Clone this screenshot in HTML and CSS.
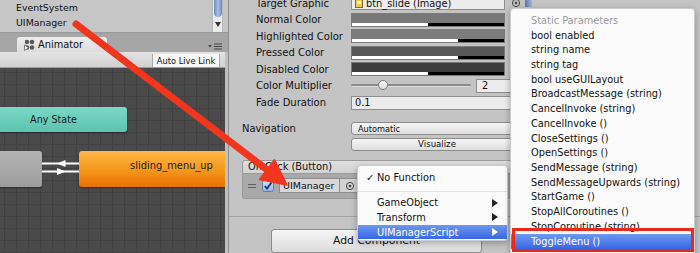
FILE: index.html
```html
<!DOCTYPE html>
<html lang="en">
<head>
    <meta charset="UTF-8">
    <meta name="viewport" content="width=device-width, initial-scale=1.0">
    <title>Unity - On Click</title>
    <link rel="stylesheet" href="styles.css">
</head>
<body>
<div class="editor">

    <div class="dock-left">
        <div class="hierarchy">
            <ul class="hier-list">
                <li>EventSystem</li>
                <li>UIManager</li>
            </ul>
            <div class="scrollbar">
                <div class="scroll-thumb"></div>
                <div class="scroll-arrow"></div>
            </div>
        </div>

        <div class="tabbar">
            <div class="tab">
                <svg class="tab-icon" width="11" height="12" viewBox="0 0 11 12">
                    <circle cx="3" cy="3" r="2.3" fill="#5a5a5a"/>
                    <circle cx="8" cy="3" r="2.3" fill="#5a5a5a"/>
                    <circle cx="3" cy="8.5" r="2.3" fill="#5a5a5a"/>
                    <circle cx="8" cy="8.5" r="2.3" fill="#5a5a5a"/>
                    <path d="M0.5 6 L0.5 11.5 L4.5 8.7 Z" fill="#ffffff" stroke="#444" stroke-width="0.6"/>
                </svg>
                <span>Animator</span>
            </div>
            <svg class="tab-menu" width="14" height="7" viewBox="0 0 14 7">
                <path d="M0 2 L4 2 L2 4.5 Z" fill="#444"/>
                <rect x="6" y="0.5" width="8" height="1" fill="#444"/>
                <rect x="6" y="3" width="8" height="1" fill="#444"/>
                <rect x="6" y="5.5" width="8" height="1" fill="#444"/>
            </svg>
        </div>

        <div class="dock-body">
            <div class="animator">
                <div class="toolbar">
                    <span class="tool-btn">Auto Live Link</span>
                </div>
                <div class="graph">
                    <div class="node node-any">Any State</div>
                    <div class="node node-gray"></div>
                    <div class="node node-orange">sliding_menu_up</div>
                    <svg class="transitions" width="225" height="185" viewBox="0 0 225 185">
                        <line x1="42" y1="95.5" x2="79" y2="95.5" stroke="#ffffff" stroke-width="2"/>
                        <path d="M57 95.5 L65.5 92 L65.5 99 Z" fill="#ffffff"/>
                        <line x1="42" y1="103.5" x2="79" y2="103.5" stroke="#ffffff" stroke-width="2"/>
                        <path d="M65.5 103.5 L57 100 L57 107 Z" fill="#ffffff"/>
                    </svg>
                </div>
            </div>
        </div>
    </div>

    <div class="inspector">
        <div class="props">
            <div class="prop">
                <span class="prop-label">Target Graphic</span>
                <div class="field field-object">
                    <svg width="8" height="9" viewBox="0 0 8 9"><rect x="0.5" y="0.5" width="7" height="8" fill="#f0c84a" stroke="#8a6a1a"/><rect x="2" y="2" width="4" height="3" fill="#fff3b0"/></svg>
                    <span>btn_slide (Image)</span>
                </div>
                <svg class="picker" width="10" height="10" viewBox="0 0 10 10"><circle cx="5" cy="5" r="3.6" fill="none" stroke="#444" stroke-width="1"/><circle cx="5" cy="5" r="1.3" fill="#444"/></svg>
                <span class="scroll-mark"></span>
            </div>
            <div class="prop">
                <span class="prop-label">Normal Color</span>
                <div class="color color-normal"></div>
            </div>
            <div class="prop">
                <span class="prop-label">Highlighted Color</span>
                <div class="color color-highlighted"></div>
            </div>
            <div class="prop">
                <span class="prop-label">Pressed Color</span>
                <div class="color color-pressed"></div>
            </div>
            <div class="prop">
                <span class="prop-label">Disabled Color</span>
                <div class="color color-disabled"></div>
            </div>
            <div class="prop">
                <span class="prop-label">Color Multiplier</span>
                <div class="slider"><div class="slider-knob"></div></div>
                <div class="field field-num">2</div>
            </div>
            <div class="prop">
                <span class="prop-label">Fade Duration</span>
                <div class="field field-wide">0.1</div>
            </div>
        </div>

        <div class="prop prop-nav">
            <span class="prop-label">Navigation</span>
            <div class="popup">Automatic</div>
        </div>
        <div class="prop prop-nav prop-visualize">
            <span class="prop-label"></span>
            <div class="popup popup-button">Visualize</div>
        </div>

        <div class="event">
            <div class="event-head">On Click (Button)</div>
            <div class="event-body">
                <span class="handle"></span>
                <svg class="check" width="12" height="12" viewBox="0 0 12 12">
                    <defs>
                        <linearGradient id="chk" x1="0" y1="0" x2="0" y2="1">
                            <stop offset="0" stop-color="#d6e4f7"/>
                            <stop offset="1" stop-color="#93b3e2"/>
                        </linearGradient>
                    </defs>
                    <rect x="0.5" y="0.5" width="11" height="11" rx="2" fill="url(#chk)" stroke="#5d7cac"/>
                    <path d="M2.8 6 L5 8.6 L9.6 2.4" fill="none" stroke="#1b3a74" stroke-width="1.8"/>
                </svg>
                <div class="field field-target">UIManager</div>
                <div class="field field-pick">
                    <svg width="10" height="10" viewBox="0 0 10 10"><circle cx="5" cy="5" r="3.6" fill="none" stroke="#444" stroke-width="1"/><circle cx="5" cy="5" r="1.3" fill="#444"/></svg>
                </div>
            </div>
        </div>

        <div class="add-row">
            <div class="add-btn">Add Component</div>
        </div>
    </div>

    <div class="menu menu-functions">
        <div class="menu-item"><span class="tick">&#10003;</span>No Function</div>
        <div class="menu-sep"></div>
        <div class="menu-item">GameObject<span class="sub-arrow"></span></div>
        <div class="menu-item">Transform<span class="sub-arrow"></span></div>
        <div class="menu-item selected">UIManagerScript<span class="sub-arrow"></span></div>
    </div>

    <div class="menu menu-methods">
        <div class="menu-item disabled">Static Parameters</div>
        <div class="menu-item">bool enabled</div>
        <div class="menu-item">string name</div>
        <div class="menu-item">string tag</div>
        <div class="menu-item">bool useGUILayout</div>
        <div class="menu-item">BroadcastMessage (string)</div>
        <div class="menu-item">CancelInvoke (string)</div>
        <div class="menu-item">CancelInvoke ()</div>
        <div class="menu-item">CloseSettings ()</div>
        <div class="menu-item">OpenSettings ()</div>
        <div class="menu-item">SendMessage (string)</div>
        <div class="menu-item">SendMessageUpwards (string)</div>
        <div class="menu-item">StartGame ()</div>
        <div class="menu-item">StopAllCoroutines ()</div>
        <div class="menu-item">StopCoroutine (string)</div>
        <div class="menu-item selected">ToggleMenu ()</div>
        <div class="mark-box"></div>
    </div>

    <svg class="callout" width="700" height="253" viewBox="0 0 700 253">
        <line x1="76" y1="24" x2="270" y2="172" stroke="#f2361d" stroke-width="7" stroke-linecap="round"/>
        <path d="M287 185 L259.5 179.5 L274.5 159.8 Z" fill="#f2361d" stroke="#f2361d" stroke-width="1.5" stroke-linejoin="round"/>
    </svg>
</div>
</body>
</html>
```

FILE: styles.css
```css
* {
    box-sizing: border-box;
}

body {
    margin: 0;
    width: 700px;
    height: 253px;
    overflow: hidden;
    font-family: 'DejaVu Sans', sans-serif;
    font-size: 10px;
    color: #111111;
    background-color: #c4c4c4;
}

.editor {
    position: relative;
    display: flex;
    width: 700px;
    height: 253px;
    overflow: hidden;
}

/* left dock: hierarchy + animator */

.dock-left {
    width: 229px;
    flex-shrink: 0;
    display: flex;
    flex-direction: column;
    border-right: 1px solid #8e8e8e;
}

.hierarchy {
    height: 33px;
    display: flex;
    background-color: #c6c6c6;
    border-bottom: 1px solid #9a9a9a;
}

.hier-list {
    list-style: none;
    margin: 0;
    padding: 0 0 0 16px;
    flex: 1;
    font-size: 9.4px;
}

.hier-list li {
    height: 15px;
    line-height: 16px;
}

.scrollbar {
    width: 11px;
    margin-right: 5px;
    display: flex;
    flex-direction: column;
    align-items: center;
    background-color: #ececec;
    border-left: 1px solid #b5b5b5;
    border-right: 1px solid #b5b5b5;
}

.scroll-thumb {
    width: 8px;
    height: 17px;
    border-radius: 0 0 4px 4px;
    background: linear-gradient(90deg, #6a8bc2, #aac0e2 50%, #6a8bc2);
}

.scroll-arrow {
    margin-top: 5px;
    width: 0;
    height: 0;
    border-left: 3px solid transparent;
    border-right: 3px solid transparent;
    border-top: 5px solid #333333;
}

.tabbar {
    height: 19px;
    display: flex;
    align-items: flex-end;
    justify-content: space-between;
    padding: 0 6px 0 17px;
    background-color: #a6a6a6;
}

.tab {
    width: 90px;
    height: 15px;
    display: flex;
    align-items: center;
    gap: 3px;
    padding-left: 7px;
    border-radius: 3px 3px 0 0;
    background: linear-gradient(#eeeeee, #dcdcdc);
    font-size: 9.8px;
}

.tab-menu {
    margin-bottom: 2px;
}

.dock-body {
    flex: 1;
    display: flex;
    padding-right: 3px;
    background-color: #c0c0c0;
}

.animator {
    flex: 1;
    display: flex;
    flex-direction: column;
}

.toolbar {
    height: 16px;
    display: flex;
    align-items: flex-end;
    justify-content: flex-end;
    padding-right: 5px;
    background: linear-gradient(#e4e4e4, #d0d0d0);
    border-bottom: 1px solid #9c9c9c;
}

.tool-btn {
    height: 13px;
    width: 68px;
    display: flex;
    align-items: center;
    justify-content: center;
    background-color: #f7f7f7;
    border-left: 1px solid #aaaaaa;
    border-right: 1px solid #aaaaaa;
    font-size: 8.3px;
}

.graph {
    flex: 1;
    position: relative;
    overflow: hidden;
    background-color: #4a4a4a;
    background-image:
        linear-gradient(#414141 1px, transparent 1px),
        linear-gradient(90deg, #414141 1px, transparent 1px);
    background-size: 12px 12px;
    background-position: 4px 4px;
}

.node {
    position: absolute;
    display: flex;
    align-items: center;
    justify-content: center;
    border-radius: 3px;
    box-shadow: 0 1px 2px rgba(0, 0, 0, 0.4);
    font-size: 9.6px;
    color: #1a1a1a;
}

.node-any {
    left: -20px;
    top: 39px;
    width: 147px;
    height: 25px;
    background: linear-gradient(#79d8c6, #5cc4af);
}

.node-gray {
    left: -6px;
    top: 83px;
    width: 48px;
    height: 36px;
    background: linear-gradient(#b4b4b4, #9c9c9c);
}

.node-orange {
    left: 79px;
    top: 83px;
    width: 185px;
    height: 36px;
    padding-bottom: 7px;
    background: linear-gradient(#fdb848, #f59a1e 50%, #ea7000);
    font-size: 9.9px;
}

.transitions {
    position: absolute;
    left: 0;
    top: 0;
}

/* inspector */

.inspector {
    flex: 1;
    display: flex;
    flex-direction: column;
    background-color: #c4c4c4;
}

.props {
    margin-top: -5.3px;
}

.prop {
    height: 16.6px;
    display: flex;
    align-items: center;
    padding-left: 27px;
}

.prop-label {
    width: 95px;
    flex-shrink: 0;
}

.field {
    height: 14px;
    display: flex;
    align-items: center;
    gap: 3px;
    padding-left: 3px;
    background-color: #ececec;
    border: 1px solid #8e8e8e;
    font-size: 9.8px;
}

.field-object {
    width: 154px;
}

.picker {
    margin-left: 6px;
}

.scroll-mark {
    width: 7px;
    height: 16px;
    margin-left: 4px;
    margin-top: -8px;
    background: linear-gradient(90deg, #5b79a8, #9fb6da);
}

.color {
    width: 154px;
    height: 14px;
    border: 1px solid #7a7a7a;
    background-repeat: no-repeat;
    background-position: left bottom;
    background-size: 100% 3px;
}

.color-normal {
    background-color: #787878;
    background-image: linear-gradient(90deg, #ffffff 50%, #000000 50%);
}

.color-highlighted {
    background-color: #7c7c7c;
    background-image: linear-gradient(90deg, #ffffff 70%, #000000 70%);
}

.color-pressed {
    background-color: #575757;
    background-image: linear-gradient(90deg, #ffffff 70%, #000000 70%);
}

.color-disabled {
    background-color: #3c3c3c;
    background-image: linear-gradient(90deg, #ffffff 50%, #000000 50%);
}

.slider {
    position: relative;
    width: 120px;
    height: 3px;
    border-radius: 2px;
    background-color: #8c8c8c;
    border-bottom: 1px solid #dddddd;
}

.slider-knob {
    position: absolute;
    left: 27px;
    top: -4px;
    width: 10px;
    height: 10px;
    border-radius: 50%;
    background: linear-gradient(#ffffff, #dcdcdc);
    border: 1px solid #7d7d7d;
}

.field-num {
    margin-left: 5px;
    width: 50px;
    padding-left: 5px;
}

.field-wide {
    width: 172px;
}

.prop-nav {
    padding-left: 13px;
    margin-top: 11.3px;
}

.prop-nav .prop-label {
    width: 109px;
}

.prop-visualize {
    margin-top: 2.4px;
}

.popup {
    width: 172px;
    height: 13px;
    display: flex;
    align-items: center;
    padding-left: 6px;
    background: linear-gradient(#f6f6f6, #dedede);
    border: 1px solid #8c8c8c;
    border-radius: 3px;
    font-size: 8.2px;
}

.popup-button {
    justify-content: center;
    padding-left: 0;
    font-size: 8.6px;
}

.event {
    margin: 9.2px 0 0 13px;
    width: 280px;
}

.event-head {
    height: 14px;
    display: flex;
    align-items: center;
    padding-left: 5px;
    background: linear-gradient(#e0e0e0, #d2d2d2);
    border: 1px solid #9a9a9a;
    border-radius: 3px 3px 0 0;
    font-size: 9.8px;
}

.event-body {
    height: 25px;
    display: flex;
    align-items: center;
    padding-left: 5px;
    background-color: #a9a9a9;
    border: 1px solid #9a9a9a;
    border-top: none;
    border-radius: 0 0 3px 3px;
}

.handle {
    width: 8px;
    height: 4px;
    border-top: 1px solid #5e5e5e;
    border-bottom: 1px solid #5e5e5e;
}

.check {
    margin-left: 6px;
}

.field-target {
    margin-left: 5px;
    width: 61px;
    height: 15px;
    padding-left: 3px;
    background-color: #d8d8d8;
    font-size: 9.5px;
}

.field-pick {
    width: 40px;
    height: 15px;
    padding-left: 5px;
    background-color: #d2d2d2;
    border-left: none;
}

.add-row {
    margin-top: 17px;
    padding: 12px 0 0 42px;
    border-top: 1px solid #a2a2a2;
}

.add-btn {
    width: 211px;
    height: 24px;
    padding-top: 3px;
    line-height: 15px;
    text-align: center;
    background: linear-gradient(#f6f6f6, #dcdcdc);
    border: 1px solid #8c8c8c;
    border-radius: 3px;
    font-size: 10.8px;
}

/* popup menus */

.menu {
    position: absolute;
    background-color: #fbfbfb;
    border: 1px solid rgba(0, 0, 0, 0.18);
    border-radius: 4px;
    box-shadow: 0 2px 6px rgba(0, 0, 0, 0.3);
    font-size: 9.8px;
    color: #111111;
}

.menu-functions {
    left: 357px;
    top: 165px;
    width: 151px;
    height: 76px;
    padding-top: 4px;
}

.menu-methods {
    left: 510px;
    top: 8px;
    width: 185px;
    height: 252px;
    padding-top: 4px;
}

.menu-item {
    display: flex;
    align-items: center;
    justify-content: space-between;
    height: 14.6px;
    padding: 0 9px 0 19px;
}

.menu-methods .menu-item {
    height: 14.73px;
    padding-left: 20px;
}

.menu-item.disabled {
    color: #9c9c9c;
}

.menu-item.selected {
    color: #ffffff;
    background: linear-gradient(#6e98f2, #3667e4);
}

.tick {
    width: 11px;
    margin-left: -11px;
}

.menu-functions .menu-item:first-child {
    justify-content: flex-start;
}

.menu-sep {
    height: 12px;
    border-bottom: 1px solid #e2e2e2;
    margin-bottom: -1px;
    transform: translateY(-5px);
}

.sub-arrow {
    width: 0;
    height: 0;
    border-top: 4px solid transparent;
    border-bottom: 4px solid transparent;
    border-left: 6px solid #222222;
}

.selected .sub-arrow {
    border-left-color: #ffffff;
}

.mark-box {
    position: absolute;
    left: 1px;
    top: 219px;
    width: 182px;
    height: 24px;
    border: 3px solid #e8291c;
}

.callout {
    position: absolute;
    left: 0;
    top: 0;
    pointer-events: none;
}
```
